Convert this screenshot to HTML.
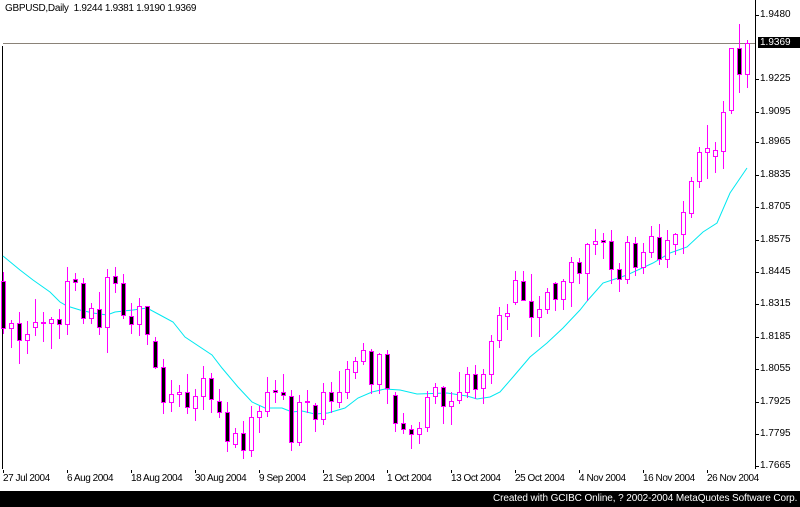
<!DOCTYPE html>
<html><head><meta charset="utf-8"><style>
html,body{margin:0;padding:0;background:#fff;}
#w{position:relative;width:800px;height:507px;overflow:hidden;font-family:"Liberation Sans",sans-serif;}
svg{position:absolute;left:0;top:0;}
.t{position:absolute;font-size:10px;color:#000;white-space:nowrap;line-height:12px;}
.d{letter-spacing:-0.45px;}
#foot{position:absolute;left:0;top:491px;width:800px;height:16px;background:#000;color:#fff;font-size:10px;line-height:16px;text-align:right;letter-spacing:-0.1px;}
</style></head><body><div id="w">
<svg id="s" width="800" height="507" shape-rendering="crispEdges"></svg>
<div class="t" style="left:5px;top:3px;font-size:10px;letter-spacing:-0.3px">GBPUSD,Daily&nbsp; 1.9244 1.9381 1.9190 1.9369</div>
<div class="t" style="left:760px;top:9px">1.9480</div>
<div class="t" style="left:760px;top:73px">1.9225</div>
<div class="t" style="left:760px;top:106px">1.9095</div>
<div class="t" style="left:760px;top:136px">1.8965</div>
<div class="t" style="left:760px;top:169px">1.8835</div>
<div class="t" style="left:760px;top:201px">1.8705</div>
<div class="t" style="left:760px;top:234px">1.8575</div>
<div class="t" style="left:760px;top:266px">1.8445</div>
<div class="t" style="left:760px;top:298px">1.8315</div>
<div class="t" style="left:760px;top:331px">1.8185</div>
<div class="t" style="left:760px;top:363px">1.8055</div>
<div class="t" style="left:760px;top:396px">1.7925</div>
<div class="t" style="left:760px;top:428px">1.7795</div>
<div class="t" style="left:760px;top:460px">1.7665</div>
<div class="t" style="left:758px;top:37px;width:42px;height:11px;background:#000;color:#fff;padding-left:2px;line-height:11px">1.9369</div>
<div class="t d" style="left:3px;top:473px">27 Jul 2004</div>
<div class="t d" style="left:67px;top:473px">6 Aug 2004</div>
<div class="t d" style="left:131px;top:473px">18 Aug 2004</div>
<div class="t d" style="left:195px;top:473px">30 Aug 2004</div>
<div class="t d" style="left:259px;top:473px">9 Sep 2004</div>
<div class="t d" style="left:323px;top:473px">21 Sep 2004</div>
<div class="t d" style="left:387px;top:473px">1 Oct 2004</div>
<div class="t d" style="left:451px;top:473px">13 Oct 2004</div>
<div class="t d" style="left:515px;top:473px">25 Oct 2004</div>
<div class="t d" style="left:579px;top:473px">4 Nov 2004</div>
<div class="t d" style="left:643px;top:473px">16 Nov 2004</div>
<div class="t d" style="left:707px;top:473px">26 Nov 2004</div>
<div id="foot">Created with GCIBC Online, ? 2002-2004 MetaQuotes Software Corp.&nbsp;</div>
</div>
<script>
var C=[[272,333,281,328,1],[320,347,323,328,0],[312,363,323,340,1],[321,353,334,340,0],[299,335,322,327,0],[312,341,322,323,1],[317,348,319,323,0],[309,338,319,324,1],[267,334,281,324,0],[273,290,279,282,1],[278,323,283,318,1],[303,323,308,318,0],[292,334,309,327,1],[269,352,277,327,0],[267,292,276,283,1],[274,318,283,315,1],[303,333,316,324,1],[298,335,306,324,0],[306,344,306,334,1],[337,368,341,367,1],[359,413,367,402,1],[380,411,394,402,0],[385,406,392,394,0],[374,413,392,407,1],
[389,420,396,408,0],[366,409,378,396,0],[373,412,378,399,1],[389,417,401,412,1],[402,451,412,441,1],[428,447,433,444,0],[421,458,433,450,1],[406,456,417,450,0],[406,432,411,417,0],[377,416,392,411,0],[380,402,390,392,1],[374,399,392,395,1],[390,450,396,442,1],[395,445,402,442,0],[390,412,401,402,1],[403,431,405,419,1],[383,424,392,419,0],[382,412,392,401,1],[371,407,392,402,0],[361,398,369,392,0],[357,378,361,372,0],[343,364,350,361,0],[349,393,351,384,1],[353,393,354,384,0],
[350,403,354,388,1],[392,431,395,423,1],[413,433,423,429,1],[425,448,429,434,1],[422,443,428,434,0],[391,431,397,427,0],[383,403,387,396,0],[386,423,387,406,1],[392,424,401,406,0],[372,403,392,400,0],[367,397,374,392,0],[365,398,374,389,1],[369,403,374,388,0],[335,383,341,374,0],[307,347,315,340,0],[304,329,313,316,0],[271,304,280,302,0],[271,300,281,300,1],[274,336,301,317,1],[296,336,309,317,0],[288,313,292,309,0],[282,310,283,299,1],[279,309,281,299,0],[257,306,262,282,0],[258,283,262,273,1],
[243,300,244,273,0],[229,254,241,244,0],[233,258,240,242,1],[230,283,241,269,1],[263,291,269,279,1],[236,283,242,279,0],[237,275,243,267,1],[243,273,252,267,0],[226,257,236,252,0],[224,264,237,259,1],[230,267,240,259,0],[233,254,234,244,0],[201,253,212,234,0],[177,217,181,213,0],[147,187,152,181,0],[125,178,148,152,0],[142,172,150,156,0],[101,168,112,151,0],[99,113,48,110,0],[24,92,48,74,1],[40,87,43,74,0]];
var s='';
s+='<line x1="2.5" y1="46" x2="2.5" y2="469" stroke="#000"/>';
s+='<line x1="755.5" y1="0" x2="755.5" y2="469" stroke="#000"/>';
[15,79,112,142,175,207,240,272,304,337,369,402,434,466].forEach(function(y){s+='<line x1="756" y1="'+(y+.5)+'" x2="759" y2="'+(y+.5)+'" stroke="#000"/>';});
for(var i=0;i<12;i++){var x=3+64*i+.5;s+='<line x1="'+x+'" y1="470" x2="'+x+'" y2="473" stroke="#000"/>';}
s+='<line x1="3" y1="43.5" x2="755" y2="43.5" stroke="#8a8278"/>';
var M=[[3,256],[20,270],[33,280],[50,292],[60,302],[67,306],[80,310],[93,313],[107,315],[115,312],[133,310],[147,308],[160,315],[173,322],[185,337],[212,355],[222,368],[238,387],[252,402],[265,408],[282,408],[292,412],[302,411],[315,414],[328,413],[345,408],[358,398],[372,392],[385,389],[400,390],[417,394],[447,393],[467,396],[477,399],[490,397],[500,392],[513,377],[530,357],[547,343],[563,328],[580,310],[588,300],[603,283],[627,275],[653,263],[670,253],[687,247],[703,232],[717,223],[730,193],[747,168]];
s+='<polyline fill="none" stroke="#00e8f0" stroke-width="1" shape-rendering="auto" points="'+M.map(function(p){return p.join(',')}).join(' ')+'"/>';
C.forEach(function(c,i){var x=3+8*i;
s+='<line x1="'+(x+.5)+'" y1="'+c[0]+'" x2="'+(x+.5)+'" y2="'+(c[1]+1)+'" stroke="#f0f"/>';
var h=Math.max(c[3]-c[2],1);
s+='<rect x="'+(x-1.5)+'" y="'+(c[2]+.5)+'" width="4" height="'+h+'" fill="'+(c[4]?'#000':'#fff')+'" stroke="#f0f"/>';});
document.getElementById('s').innerHTML=s;
</script>
</body></html>
